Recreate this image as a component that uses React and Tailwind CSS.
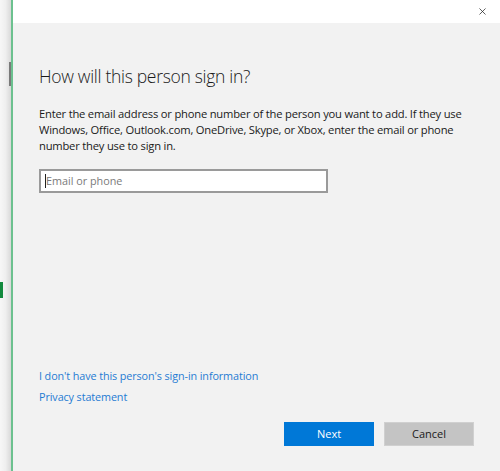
import { X } from "lucide-react";

const FONT = { fontFamily: '"Open Sans", "Noto Sans", sans-serif' };

export default function App() {
  return (
    <div className="flex h-[471px] w-[500px] overflow-hidden bg-white" style={FONT}>
      {/* background window peeking out on the left */}
      <div className="relative w-[11px] shrink-0 bg-gradient-to-r from-[#f7f7f7] via-[#efefef] to-[#d9d9d9]">
        <div className="absolute left-[9px] top-[62px] h-[24px] w-[2px] bg-[#7a7a7a]" />
        <div className="absolute left-0 top-[282px] h-[16px] w-[3px] bg-[#138a3e]" />
      </div>
      <div className="w-[2px] shrink-0 bg-[#6cc18f]" />

      {/* dialog */}
      <div className="flex flex-1 flex-col">
        <div className="flex h-[23px] items-center justify-end bg-white pr-[12px]">
          <X className="h-[11px] w-[11px] text-[#222]" strokeWidth={1.6} />
        </div>
        <div className="flex flex-1 flex-col bg-[#f2f2f2] px-[26px]">
          <h1 className="mt-[40px] text-[17.5px] font-light leading-[26px] tracking-[-0.3px] text-[#1a1a1a]">
            How will this person sign in?
          </h1>
          <p className="mt-[17px] text-[11.2px] leading-[16px] tracking-[-0.2px] text-[#1a1a1a]">
            Enter the email address or phone number of the person you want to add. If they use Windows, Office, Outlook.com, OneDrive, Skype, or Xbox, enter the email or phone number they use to sign in.
          </p>
          <div className="mt-[15px] flex h-[24px] w-[289px] items-center border-2 border-[#9a9a9a] bg-white px-[4px]">
            <span className="h-[14px] w-px bg-[#222]" />
            <span className="text-[10.8px] text-[#7a7a7a]">Email or phone</span>
          </div>

          <div className="mt-auto flex flex-col items-start gap-[5px] text-[10.8px] tracking-[-0.1px] text-[#1f7bd3]">
            <span className="leading-[16px]">I don't have this person's sign-in information</span>
            <span className="leading-[16px]">Privacy statement</span>
          </div>

          <div className="mb-[25px] mt-[17px] flex justify-end gap-[10px]">
            <button className="h-[24px] w-[90px] border border-[#0078d7] bg-[#0078d7] text-[11px] text-white">Next</button>
            <button className="h-[24px] w-[90px] border border-[#d0d0d0] bg-[#c4c4c4] text-[11px] text-[#1a1a1a]">Cancel</button>
          </div>
        </div>
      </div>
    </div>
  );
}
